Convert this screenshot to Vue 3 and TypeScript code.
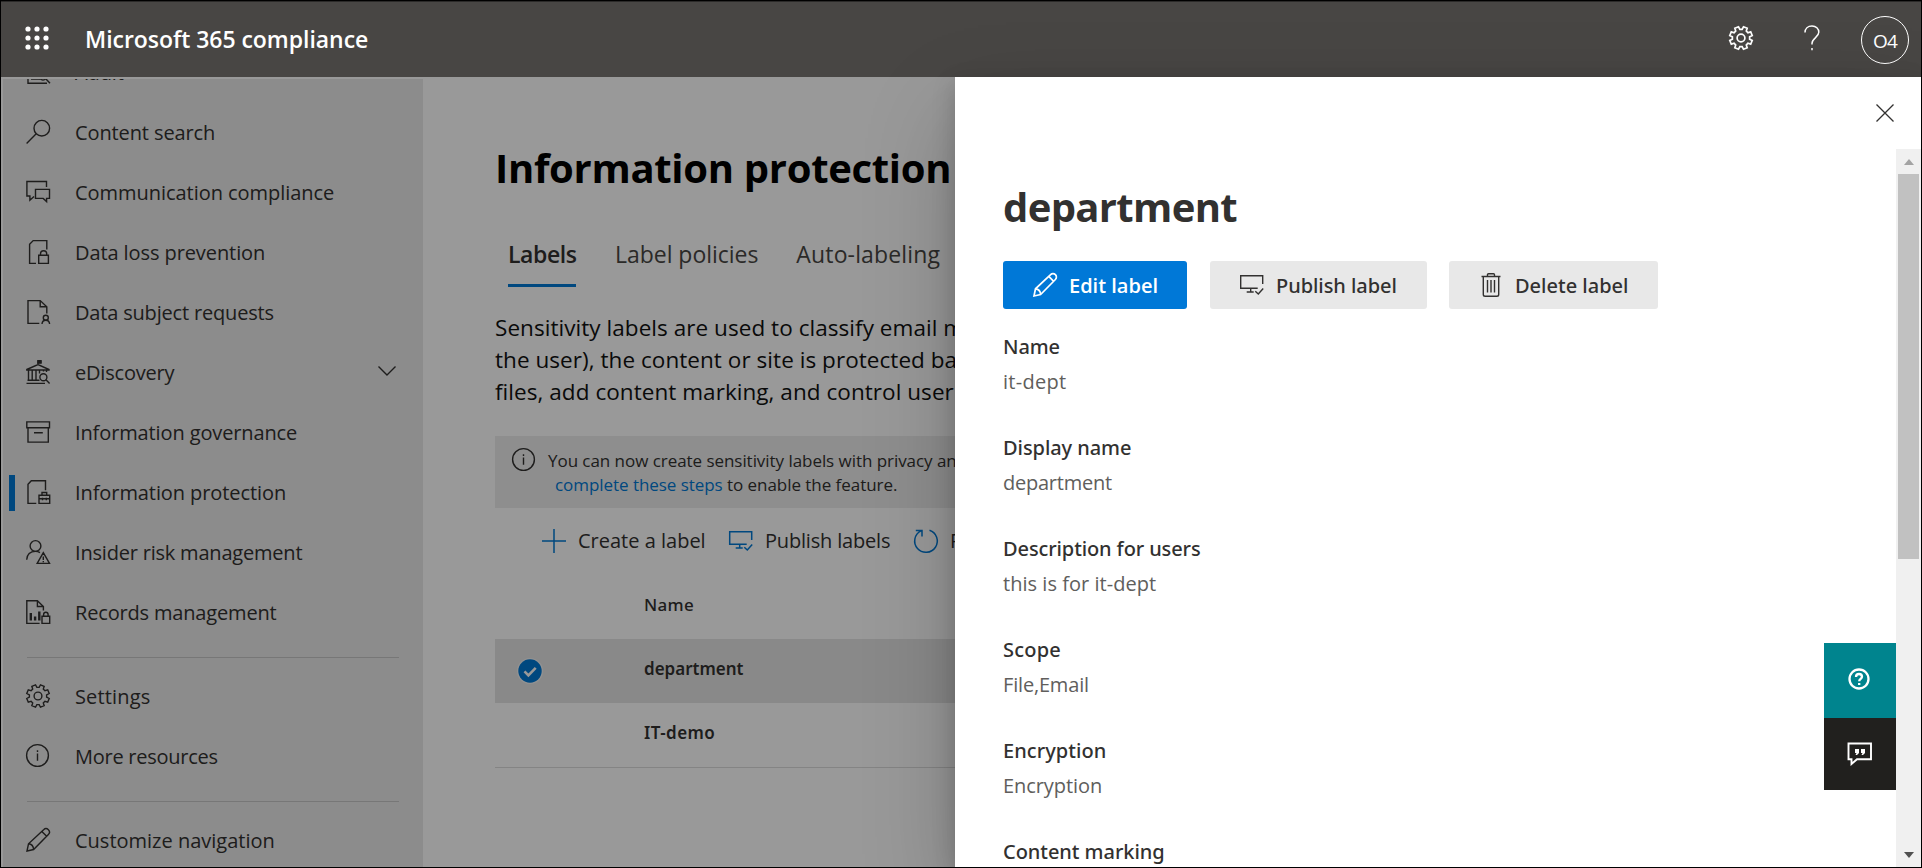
<script setup lang="ts">
interface NavItem { label: string; icon: string; track: number; expandable?: boolean; active?: boolean }
interface Field { name: string; value: string; nameTrack: number; valueTrack: number }

function gearPath(): string {
  const point = (radius: number, deg: number) => {
    const a = (deg * Math.PI) / 180
    return `${(12 + radius * Math.cos(a)).toFixed(2)} ${(12 + radius * Math.sin(a)).toFixed(2)}`
  }
  const points: string[] = []
  for (let i = 0; i < 8; i++) {
    const c = 22.5 + i * 45
    points.push(point(8.7, c - 15), point(11.5, c - 10), point(11.5, c + 10), point(8.7, c + 15))
  }
  return `<path d="M${points.join('L')}Z"/><circle cx="12" cy="12" r="3.9"/>`
}

const icons: Record<string, string> = {
  audit: '<path d="M2 1v22.3h19M5 15h9M5 19h9"/><circle cx="17" cy="16" r="4"/><path d="m20 19 4 4.3"/>',
  search: '<circle cx="15.8" cy="8.2" r="7.8"/><path d="M10.2 13.8.6 23.4"/>',
  chat: '<path d="M20.5 7V1.5H.9V16h3v4.2L8 16.5M9.5 9.4h14v9h-2.9v3.2l-3.4-3.2H9.5z"/>',
  docLock: '<path d="M10 23.4H3.6V4.3L7.2.6h13.6v9"/><path d="M12.7 15.2h9.7v8.2h-9.7zM14.5 15v-1.2a3.1 3.1 0 0 1 6.2 0V15"/>',
  docPerson: '<path d="M13.3 23.4H2V.6h12.2l6.6 6.2v6.6M14.2.6v6.2h6.6"/><circle cx="19.8" cy="17.7" r="2.5"/><path d="M16 24c.2-2.4 1.7-3.7 3.8-3.7s3.6 1.3 3.8 3.7"/>',
  ediscovery: '<path d="M12 4.5V.6h2.8v2H12M.8 9.5 12 4.5l11 5v.5H.8zM2.5 10.5v9.5M6.2 10.5v9.5M10 10.5v9.5M13.5 10.5v3M17.5 10.5v1M20.5 10.5v1.5M1.5 20.3h12M.5 23.4h18.5"/><path d="M12 1h3v2h-3z" fill="currentColor"/><circle cx="17.4" cy="17.3" r="3.5"/><path d="m20 19.8 3.6 3.7"/>',
  archive: '<path d="M.8 1.9h22.7v5.9H.8zM2 7.8v14.3h20.3V7.8M8 12.7h8.8"/>',
  docCase: '<path d="M10.3 23.4H2V4.3L5.3.7h14.2v9.5"/><path d="M13 15.3h10.7v8.1H13zM16 15v-2.5h4.7V15M13 18.8h10.7M16.5 17.8v2.5M20.3 17.8v2.5"/>',
  personRisk: '<circle cx="9.5" cy="6" r="5.4"/><path d="M.7 19.7c.3-4.500 3-8.300 8.800-8.300 1.800 0 3.300.500 4.500 1.200M17.300 12.700l6.200 10.700H11.200zM17.300 16.500v3.400M17.300 21v1.200"/>',
  records: '<path d="M13.6 23.4H.8V.7h10.600l6 5.800v4M11.400.700v5.800h6"/><path d="M4.800 13v7.500M9.100 16.500v4M13.300 11.500v9" stroke-width="2.400"/><path d="M16 16.200h7.700v7.200H16zM17.600 16v-1.500a2.200 2.200 0 0 1 4.500 0V16"/>',
  gear: gearPath(),
  info: '<circle cx="11.5" cy="11.5" r="10.9"/><path d="M11.5 9.5v7.3M11.5 6.3v1.7"/>',
  pencil: '<path d="m1 23 1.500-7.200L17.600 1.700a3.300 3.300 0 0 1 4.800 4.800L7.600 21.500zM2.500 15.800c2.700.200 4.900 2.400 5.100 5.700M15.800 3.400l4.900 4.900"/>',
  monitor: '<path d="M22.700 11V2.800H.7v12.500h17M10.700 15.300v3.700M6.700 19h7M15.300 18.200l3 2.800 4.900-5.500"/>',
  plus: '<path d="M12 0v24M0 12h24"/>',
  refresh: '<path d="M15.500 1.300A11.300 11.300 0 1 1 7 1.900M1.800 1.500H8v6"/>',
  trash: '<path d="M2.500 3.500h19M8.500 3.300V1.800q0-1 1-1h5q1 0 1 1v1.500M4.300 3.500v18q0 1.800 1.800 1.800h11.800q1.800 0 1.800-1.800v-18M8.500 7v12.500M12 7v12.500M15.500 7v12.500"/>',
}

const navMain: NavItem[] = [
  { label: 'Audit', icon: 'audit', track: -0.1 },
  { label: 'Content search', icon: 'search', track: -0.11 },
  { label: 'Communication compliance', icon: 'chat', track: -0.04 },
  { label: 'Data loss prevention', icon: 'docLock', track: -0.09 },
  { label: 'Data subject requests', icon: 'docPerson', track: -0.18 },
  { label: 'eDiscovery', icon: 'ediscovery', track: -0.2, expandable: true },
  { label: 'Information governance', icon: 'archive', track: -0.12 },
  { label: 'Information protection', icon: 'docCase', track: -0.08, active: true },
  { label: 'Insider risk management', icon: 'personRisk', track: -0.2 },
  { label: 'Records management', icon: 'records', track: -0.17 },
]
const navTools: NavItem[] = [
  { label: 'Settings', icon: 'gear', track: 0.15 },
  { label: 'More resources', icon: 'info', track: -0.26 },
]
const navCustomize: NavItem[] = [{ label: 'Customize navigation', icon: 'pencil', track: 0 }]
const navGroups = [navMain, navTools, navCustomize]

const fields: Field[] = [
  { name: 'Name', value: 'it-dept', nameTrack: -0.13, valueTrack: 0.28 },
  { name: 'Display name', value: 'department', nameTrack: -0.06, valueTrack: -0.24 },
  { name: 'Description for users', value: 'this is for it-dept', nameTrack: -0.11, valueTrack: 0.03 },
  { name: 'Scope', value: 'File,Email', nameTrack: 0.2, valueTrack: -0.18 },
  { name: 'Encryption', value: 'Encryption', nameTrack: 0.05, valueTrack: -0.07 },
  { name: 'Content marking', value: '', nameTrack: -0.05, valueTrack: 0 },
]
</script>

<template>
  <div class="shell">
    <header class="topbar">
      <svg class="waffle" viewBox="0 0 24 24">
        <template v-for="r in 3" :key="r">
          <circle v-for="c in 3" :key="c" :cx="c * 9 - 6" :cy="r * 9 - 6" r="2.6" />
        </template>
      </svg>
      <span class="brand">Microsoft 365 compliance</span>
      <svg class="icon top-gear" viewBox="0 0 24 24" v-html="icons.gear" />
      <svg class="icon top-help" viewBox="0 0 16 26"><path d="M1 7.500C1 3.500 4 1 8 1s6.800 2.500 6.800 6.300c0 5-6.800 5.700-6.800 11.200v1M8 23v2.300" /></svg>
      <span class="avatar">O4</span>
    </header>

    <div class="body">
      <nav class="sidebar">
        <ul v-for="(group, g) in navGroups" :key="g" class="nav-group">
          <li v-for="item in group" :key="item.label" class="nav-item" :class="{ active: item.active }">
            <svg class="icon" viewBox="0 0 24 24" v-html="icons[item.icon]" />
            <span :style="{ letterSpacing: item.track + 'px' }">{{ item.label }}</span>
            <svg v-if="item.expandable" class="icon chevron" viewBox="0 0 18 10"><path d="m.5.5 8.500 8.500L17.500.5" /></svg>
          </li>
        </ul>
      </nav>

      <main class="content">
        <h1>Information protection</h1>
        <div class="tabs">
          <span class="tab selected">Labels</span>
          <span class="tab second">Label policies</span>
          <span class="tab third">Auto-labeling</span>
        </div>
        <p class="intro">
          <span class="line">Sensitivity labels are used to classify email m</span>
          <span class="line">the user), the content or site is protected ba</span>
          <span class="line">files, add content marking, and control user</span>
        </p>
        <div class="notice">
          <svg class="icon" viewBox="0 0 24 24" v-html="icons.info" />
          <div class="notice-text">
            <div>You can now create sensitivity labels with privacy an</div>
            <div class="steps"><a>complete these steps</a> to enable the feature.</div>
          </div>
        </div>
        <div class="commands">
          <svg class="icon" viewBox="0 0 24 24" v-html="icons.plus" /><span class="create">Create a label</span>
          <svg class="icon" viewBox="0 0 24 24" v-html="icons.monitor" /><span class="publish">Publish labels</span>
          <svg class="icon" viewBox="0 0 24 24" v-html="icons.refresh" /><span>Refresh</span>
        </div>
        <div class="table">
          <div class="row head"><span>Name</span></div>
          <div class="row picked">
            <svg class="check" viewBox="0 0 28 28">
              <circle cx="14" cy="14" r="13" class="ring" /><circle cx="14" cy="14" r="11.7" class="disc" />
              <path d="m8.500 14.300 3.900 4 7.300-7.500" />
            </svg>
            <span>department</span>
          </div>
          <div class="row"><span class="demo">IT-demo</span></div>
        </div>
      </main>
      <div class="scrim"></div>
    </div>

    <aside class="panel">
      <svg class="icon close" viewBox="0 0 18 18"><path d="m.5.5 17 17M17.500.5l-17 17" /></svg>
      <div class="panel-body">
        <h2>department</h2>
        <div class="actions">
          <button class="primary"><svg class="icon" viewBox="0 0 24 24" v-html="icons.pencil" />Edit label</button>
          <button class="wide"><svg class="icon" viewBox="0 0 24 24" v-html="icons.monitor" />Publish label</button>
          <button class="remove"><svg class="icon" viewBox="0 0 24 24" v-html="icons.trash" />Delete label</button>
        </div>
        <dl>
          <div v-for="f in fields" :key="f.name" class="field">
            <dt :style="{ letterSpacing: f.nameTrack + 'px' }">{{ f.name }}</dt>
            <dd :style="{ letterSpacing: f.valueTrack + 'px' }">{{ f.value }}</dd>
          </div>
        </dl>
      </div>
      <div class="scrollbar">
        <span class="arrow up"></span><span class="thumb"></span><span class="arrow down"></span>
      </div>
      <div class="floaters">
        <div class="float help">
          <svg viewBox="0 0 22 22"><circle cx="11" cy="11" r="9.5" /><path d="M8 9c0-1.900 1.200-3 3-3s3 1.100 3 2.700c0 2-2.800 2.300-2.800 4.500M11.200 15v2" /></svg>
        </div>
        <div class="float feedback">
          <svg viewBox="0 0 26 24"><path d="M1.500 1.500h22.500v15.700H10L4.500 22v-4.800h-3z" /><path class="quote" d="M8 7h4v4l-2 2H8.500l1-2H8zM14 7h4v4l-2 2h-1.500l1-2H14z" /></svg>
        </div>
      </div>
    </aside>
  </div>
</template>

<style>
body { margin: 0; overflow: hidden; }
</style>

<style scoped>
.shell {
  position: relative; box-sizing: border-box; width: 1922px; height: 868px; overflow: hidden;
  border: 1px solid #000; background: #fff; display: flex; flex-direction: column;
  font: 400 20px/30px "Open Sans", "Noto Sans", sans-serif; color: #323130; white-space: nowrap;
}
.icon { width: 24px; height: 24px; flex: none; fill: none; stroke: currentColor; stroke-width: 1.4; overflow: visible; }

.topbar { height: 76px; flex: none; box-sizing: border-box; display: flex; align-items: center; background: #484644; color: #fff; border-top: 1px solid #2b2a29; padding-bottom: 3px; }
.waffle { width: 24px; height: 24px; margin-left: 24px; margin-top: -1px; fill: #fff; }
.brand { margin: 2px 0 0 36px; font-size: 23px; font-weight: 600; letter-spacing: -0.04px; }
.top-gear { margin-left: auto; stroke-width: 1.7; }
.top-help { width: 16px; height: 26px; margin: 0 41px 0 51px; stroke-width: 1.5; }
.avatar { box-sizing: border-box; width: 48px; height: 48px; margin: 3px 12px 0 0; border: 1px solid #fff; border-radius: 50%; text-align: center; font-size: 19px; line-height: 48px; letter-spacing: -0.8px; }

.body { position: relative; flex: 1; display: flex; min-height: 0; }
.scrim { position: absolute; inset: 0; background: rgba(0, 0, 0, 0.4); }
.sidebar { width: 420px; margin: 2px 0 0 2px; flex: none; overflow: hidden; background: #e9e9e9; }
.nav-group { list-style: none; margin: 0; padding: 0; }
.nav-group:first-child { margin-top: -36px; }
.nav-group + .nav-group::before { content: ""; display: block; height: 1px; margin: 14px 24px 9px; background: #c6c6c6; }
.nav-item { height: 60px; box-sizing: border-box; display: flex; align-items: center; padding: 0 27px 0 23px; }
.nav-item .icon { margin: -2px 25px 0 0; }
.nav-item.active { background: linear-gradient(#0078d4, #0078d4) 6px 12px / 6px 36px no-repeat; }
.nav-item .chevron { width: 18px; height: 10px; margin: -4px 0 0 auto; }

.content { flex: 1; min-width: 0; padding-left: 72px; }
h1 { margin: 57px 0 0; height: 62px; font-size: 40px; line-height: 68px; font-weight: 700; color: #000; letter-spacing: -0.3px; }
.tabs { display: flex; height: 92px; box-sizing: border-box; padding: 30px 0 0 13px; font-size: 23px; color: #484644; }
.tab { line-height: 57px; height: 61px; box-sizing: border-box; }
.tab.selected { width: 68px; font-weight: 600; color: #323130; letter-spacing: -0.4px; border-bottom: 3px solid #0078d4; }
.tab.second { margin-left: 39px; letter-spacing: -0.03px; }
.tab.third { margin-left: 38px; letter-spacing: 0.14px; }
.intro { margin: 24px 0 0; font-size: 22.5px; line-height: 32px; color: #111; letter-spacing: 0.05px; }
.line { display: block; }
.notice { display: flex; height: 72px; box-sizing: border-box; margin-top: 28px; padding: 12px 0 0 17px; background: #ededed; font-size: 17px; line-height: 24px; letter-spacing: -0.05px; }
.notice-text { margin: 1px 0 0 12px; }
.steps { padding-left: 7px; }
.notice a { color: #0078d4; }
.commands { display: flex; align-items: center; margin: 17px 0 0 47px; height: 32px; color: #323130; }
.commands .icon { color: #0078d4; stroke-width: 1.5; margin-right: 12px; }
.create { width: 151px; }
.publish { width: 149px; letter-spacing: -0.18px; }
.table { margin-top: 17px; font: 600 17px/24px "Noto Sans", sans-serif; }
.row { position: relative; height: 65px; box-sizing: border-box; padding: 18px 0 0 149px; border-bottom: 1px solid #ddd; }
.row.head { font-weight: 500; letter-spacing: 0.3px; border: 0; padding-top: 19px; }
.row.picked { height: 64px; background: #e5e5e5; border: 0; }
.demo { letter-spacing: 0.45px; }
.check { position: absolute; left: 21px; top: 18px; width: 28px; height: 28px; fill: none; stroke: #fff; stroke-width: 2.6; }
.check .ring { fill: #f3f3f3; stroke: none; }
.check .disc { fill: #0078d4; stroke: none; }

.panel { position: absolute; top: 76px; left: 954px; right: 0; bottom: 0; background: #fff; box-shadow: 0 38px 86px rgba(0, 0, 0, 0.22), 0 7px 22px rgba(0, 0, 0, 0.18); }
.panel-body { height: 100%; box-sizing: border-box; padding: 96px 0 0 48px; overflow: hidden; }
.close { position: absolute; left: 921px; top: 27px; width: 18px; height: 18px; stroke-width: 1.3; }
h2 { margin: 0; height: 88px; font-size: 40px; line-height: 67px; font-weight: 700; letter-spacing: -0.65px; }
.actions { display: flex; }
button { display: flex; align-items: center; box-sizing: border-box; height: 48px; padding: 2px 0 0 30px; border: 0; border-radius: 3px; background: #e8e8e8; color: #323130; font: 500 20px/28px "Noto Sans", sans-serif; }
button .icon { margin: -2px 12px 0 0; }
.primary { width: 184px; background: #0078d7; color: #fff; font: 600 20px/28px "Open Sans", sans-serif; }
.primary .icon { stroke-width: 1.7; }
.wide { width: 217px; margin-left: 23px; letter-spacing: -0.05px; }
.remove { width: 209px; margin-left: 22px; }
dl { margin: 23px 0 0; }
.field { height: 101px; }
dt { font: 500 20px/30px "Noto Sans", sans-serif; }
dd { margin: 5px 0 0; line-height: 30px; color: #605e5c; }
.scrollbar { position: absolute; right: 0; top: 72px; bottom: 0; width: 25px; background: #f0f0f0; display: flex; flex-direction: column; align-items: center; }
.thumb { width: 21px; height: 385px; margin: 9px 0 0; background: #c1c1c1; }
.arrow { border: 5.5px solid transparent; border-top: 0; border-bottom: 6px solid #a3a3a3; margin-top: 10px; }
.arrow.down { border-bottom: 0; border-top: 6px solid #505050; margin: auto 0 9px; }
.floaters { position: absolute; right: 25px; top: 566px; width: 72px; }
.float { display: flex; align-items: center; justify-content: center; height: 72px; }
.float svg { fill: none; stroke: #fff; }
.help { height: 75px; background: #00848e; }
.help svg { width: 22px; height: 22px; stroke-width: 2.3; margin: 0 2px 3px 0; }
.feedback { background: #21201e; }
.feedback svg { width: 26px; height: 24px; stroke-width: 1.9; }
.feedback .quote { fill: #fff; stroke: none; }
</style>
